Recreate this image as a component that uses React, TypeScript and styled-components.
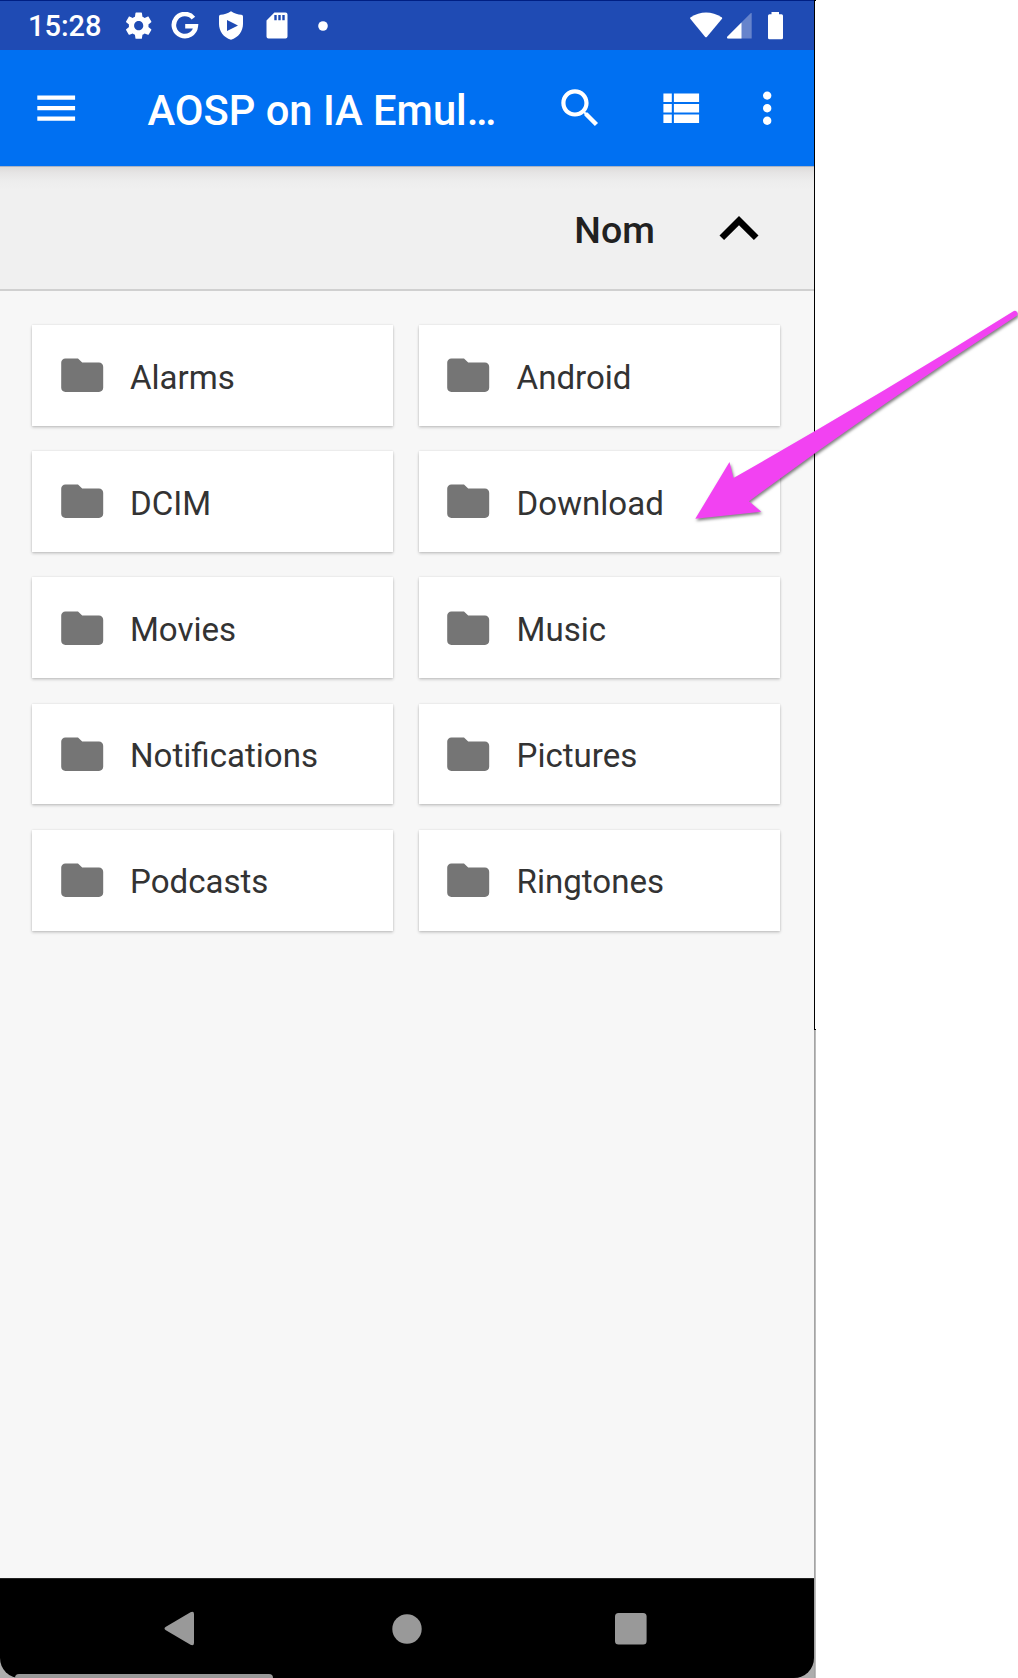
import React from "react";
import styled, { createGlobalStyle } from "styled-components";

const GlobalStyle = createGlobalStyle`
  * { box-sizing: border-box; }
  body { margin: 0; background: #fff; font-family: Roboto, "Liberation Sans", sans-serif; }
  svg { display: block; flex: none; }
`;

const Page = styled.main`
  position: relative;
  display: flex;
  width: 1018px;
  height: 1678px;
  overflow: hidden;
`;

const Screen = styled.section`
  display: flex;
  flex-direction: column;
  width: 814px;
  height: 1678px;
  background: #f7f7f7;
`;

const DeviceEdge = styled.div`
  display: flex;
  flex-direction: column;
  width: 2px;
`;

const EdgeDark = styled.div`
  height: 1030px;
  border-left: 1px solid #000;
  border-top: 1px solid #000;
  border-bottom: 1px solid #000;
  background: #fff;
`;

const EdgeLight = styled.div`
  flex: 1;
  border-left: 1px solid #a4a4a4;
  background: #bcbcbc;
`;

const StatusBar = styled.header`
  display: flex;
  align-items: center;
  height: 50px;
  padding: 0 31px 0 28px;
  border-top: 1px solid #001f83;
  background: #1f4bb4;
  color: #fff;
`;

const Clock = styled.time`
  width: 88px;
  font-size: 29px;
  font-weight: 500;
  line-height: 50px;
  padding-top: 1px;
`;

const StatusSlot = styled.span`
  display: flex;
  justify-content: center;
  width: 46px;
`;

const StatusRight = styled.div`
  display: flex;
  align-items: center;
  margin-left: auto;
`;

const Toolbar = styled.nav`
  display: flex;
  align-items: center;
  flex: none;
  height: 116px;
  padding-left: 31px;
  background: #0070f2;
  color: #fff;
`;

const Title = styled.h1`
  width: 377px;
  margin: 5px 0 0 66px;
  font-size: 41.7px;
  font-weight: 500;
  line-height: 50px;
  white-space: nowrap;
`;

const ToolButton = styled.button<{ $gap?: number; $drop?: number; $color?: string }>`
  margin: ${(p) => p.$drop ?? 0}px 0 0 ${(p) => p.$gap ?? 0}px;
  padding: 0;
  border: 0;
  background: none;
  color: ${(p) => p.$color ?? "inherit"};
`;

const SortBar = styled.div`
  display: flex;
  align-items: center;
  justify-content: flex-end;
  flex: none;
  height: 125px;
  padding-right: 35.7px;
  border-bottom: 2px solid #d0d0d0;
  background: linear-gradient(#a9b4c6 0, #a9b4c6 1px, #dddbda 1px, #e6e5e5 7px, #ededed 15px, #f0f0f0 24px);
  color: #212121;
`;

const SortLabel = styled.span`
  margin: 4px 45.4px 0 0;
  font-size: 37.5px;
  font-weight: 500;
  line-height: 46px;
`;

const Grid = styled.div`
  display: grid;
  grid-template-columns: 361.3px 361.3px;
  grid-auto-rows: 100.8px;
  gap: 25.4px 25.3px;
  padding: 34px 0 0 32px;
  flex: 1;
  align-content: start;
`;

const Card = styled.article`
  display: flex;
  align-items: center;
  padding-left: 24.6px;
  background: #fff;
  color: #757575;
  box-shadow: 0 1.5px 3px rgba(0, 0, 0, 0.2), 0 0 2px rgba(0, 0, 0, 0.13);
`;

const FolderName = styled.span`
  margin: 4.4px 0 0 23px;
  color: #333;
  font-size: 33.1px;
  line-height: 40px;
`;

const NavBackdrop = styled.div`
  height: 100px;
  background: linear-gradient(#000 50%, #adadad 50%);
`;

const NavBar = styled.footer`
  display: flex;
  flex-direction: column;
  height: 100px;
  border-top: 1px solid #222;
  border-radius: 0 0 20px 20px;
  background: #000;
`;

const NavButtons = styled.div`
  display: flex;
  align-items: center;
  height: 99px;
  padding-left: 164px;
`;

const NavSlot = styled.span<{ $width: number }>`
  display: flex;
  width: ${(p) => p.$width}px;
`;

const Handle = styled.div`
  width: 258px;
  height: 4px;
  margin: -4px 0 0 15px;
  border-radius: 5px 5px 0 0;
  background: #999;
`;

const Pointer = styled.svg`
  position: absolute;
  left: 680px;
  top: 300px;
  overflow: visible;
  filter: drop-shadow(1px 2px 1.5px rgba(0, 0, 0, 0.5));
`;

const Icon = ({ d, size = 50.4 }: { d: string; size?: number }) => (
  <svg width={size} height={size} viewBox="0 0 24 24" fill="currentColor">
    <path fillRule="evenodd" d={d} />
  </svg>
);

const paths = {
  menu: "M3 18h18v-2H3v2zm0-5h18v-2H3v2zm0-7v2h18V6H3z",
  search:
    "M15.5 14h-.79l-.28-.27C15.41 12.59 16 11.11 16 9.5 16 5.91 13.09 3 9.5 3S3 5.91 3 9.5 5.91 16 9.5 16c1.61 0 3.09-.59 4.23-1.57l.27.28v.79l5 4.99L20.49 19l-4.99-5zm-6 0C7.01 14 5 11.99 5 9.5S7.01 5 9.5 5 14 7.01 14 9.5 11.99 14 9.5 14z",
  list: "M4 14h4v-4H4v4zm0 5h4v-4H4v4zM4 9h4V5H4v4zm5 5h12v-4H9v4zm0 5h12v-4H9v4zM9 5v4h12V5H9z",
  more: "M12 8c1.1 0 2-.9 2-2s-.9-2-2-2-2 .9-2 2 .9 2 2 2zm0 2c-1.1 0-2 .9-2 2s.9 2 2 2 2-.9 2-2-.9-2-2-2zm0 6c-1.1 0-2 .9-2 2s.9 2 2 2 2-.9 2-2-.9-2-2-2z",
  up: "M12 8l-6 6 1.41 1.41L12 10.83l4.59 4.58L18 14z",
  folder: "M10 4H4c-1.1 0-1.99.9-1.99 2L2 18c0 1.1.9 2 2 2h16c1.1 0 2-.9 2-2V8c0-1.1-.9-2-2-2h-8l-2-2z",
  gear: "M19.43 12.98c.04-.32.07-.64.07-.98s-.03-.66-.07-.98l2.11-1.65c.19-.15.24-.42.12-.64l-2-3.46c-.12-.22-.39-.3-.61-.22l-2.49 1c-.52-.4-1.08-.73-1.69-.98l-.38-2.65C14.46 2.18 14.25 2 14 2h-4c-.25 0-.46.18-.49.42l-.38 2.65c-.61.25-1.17.59-1.69.98l-2.49-1c-.23-.09-.49 0-.61.22l-2 3.46c-.13.22-.07.49.12.64l2.11 1.65c-.04.32-.07.65-.07.98s.03.66.07.98l-2.11 1.65c-.19.15-.24.42-.12.64l2 3.46c.12.22.39.3.61.22l2.49-1c.52.4 1.08.73 1.69.98l.38 2.65c.03.24.24.42.49.42h4c.25 0 .46-.18.49-.42l.38-2.65c.61-.25 1.17-.59 1.69-.98l2.49 1c.23.09.49 0 .61-.22l2-3.46c.12-.22.07-.49-.12-.64l-2.11-1.65zM12 15.5c-1.93 0-3.5-1.57-3.5-3.5s1.57-3.5 3.5-3.5 3.5 1.57 3.5 3.5-1.57 3.5-3.5 3.5z",
};

const StatusIcons = () => (
  <>
    <StatusSlot><Icon d={paths.gear} size={31.4} /></StatusSlot>
    <StatusSlot>
      <svg width="28" height="28" viewBox="0 0 28 28" fill="none" stroke="#fff" strokeWidth="4.6">
        <path d="M22.4 6.1A11 11 0 1 0 24.8 14.2H14.2" />
      </svg>
    </StatusSlot>
    <StatusSlot>
      <svg width="24" height="29" viewBox="0 0 24 29" fill="#fff">
        <path
          fillRule="evenodd"
          d="M12 .3C8.700 2.700 5 3.500 1.600 3.800Q0 4 0 5.500V13C0 20 4.500 26.600 12 28.700C19.500 26.600 24 20 24 13V5.500Q24 4 22.400 3.800C19 3.500 15.300 2.700 12 .3ZM8 9L19 14.500L8 20Z"
        />
      </svg>
    </StatusSlot>
    <StatusSlot>
      <svg width="22" height="27" viewBox="0 0 22 27" fill="#fff">
        <path fillRule="evenodd" d="M8.400 .5H19.500A2 2 0 0 1 21.500 2.500V24.500A2 2 0 0 1 19.500 26.500H2.500A2 2 0 0 1 .5 24.500V8.400ZM8.300 3H10.700V8.300H8.300ZM12.300 3H14.700V8.300H12.300ZM16.300 3H18.700V8.300H16.300Z" />
      </svg>
    </StatusSlot>
    <StatusSlot>
      <svg width="10" height="10" viewBox="0 0 10 10" fill="#fff"><circle cx="5" cy="5" r="4.800" /></svg>
    </StatusSlot>
  </>
);

const SignalIcons = () => (
  <svg width="93" height="28" viewBox="0 0 93 28" fill="#fff">
    <path d="M.3 5.500Q16 -4.500 32 5.500L32.200 6.500L17 24.700Q16 25.700 15 24.700L.1 6.500Z" />
    <path d="M61.700 1.500V26.500H38.500Q36.500 26.500 37 24.900L60.600 1.300Q61.700 .5 61.700 1.500Z" opacity=".32" />
    <path d="M51.500 10.400V26.500H38.500Q36.500 26.500 37 24.900Z" />
    <path d="M81.500 0H89V2.200H91.500Q93 2.200 93 3.700V25.800Q93 27.300 91.500 27.300H79.500Q78 27.300 78 25.800V3.700Q78 2.200 79.500 2.200H81.500Z" />
  </svg>
);

const folders = [
  "Alarms", "Android", "DCIM", "Download", "Movies",
  "Music", "Notifications", "Pictures", "Podcasts", "Ringtones",
];

export default function App() {
  return (
    <Page>
      <GlobalStyle />
      <Screen>
        <StatusBar>
          <Clock>15:28</Clock>
          <StatusIcons />
          <StatusRight><SignalIcons /></StatusRight>
        </StatusBar>
        <Toolbar>
          <ToolButton aria-label="Menu"><Icon d={paths.menu} /></ToolButton>
          <Title>AOSP on IA Emul…</Title>
          <ToolButton $gap={31} aria-label="Rechercher"><Icon d={paths.search} /></ToolButton>
          <ToolButton $gap={49.1} aria-label="Liste"><Icon d={paths.list} /></ToolButton>
          <ToolButton $gap={37.1} aria-label="Plus"><Icon d={paths.more} /></ToolButton>
        </Toolbar>
        <SortBar>
          <SortLabel>Nom</SortLabel>
          <ToolButton $drop={3} $color="#000" aria-label="Ordre"><Icon d={paths.up} size={78} /></ToolButton>
        </SortBar>
        <Grid>
          {folders.map((name) => (
            <Card key={name}>
              <Icon d={paths.folder} />
              <FolderName>{name}</FolderName>
            </Card>
          ))}
        </Grid>
        <NavBackdrop>
          <NavBar>
            <NavButtons>
              <NavSlot $width={227.5}>
                <svg width="31" height="35" viewBox="0 0 31 35" fill="#999">
                  <path d="M1.500 16L26.500 1.300Q30 -.2 30 3V32Q30 35.200 26.500 33.700L1.500 19Q-.5 17.500 1.500 16Z" />
                </svg>
              </NavSlot>
              <NavSlot $width={223.5}>
                <svg width="30" height="30" viewBox="0 0 30 30" fill="#999"><circle cx="15" cy="15" r="14.700" /></svg>
              </NavSlot>
              <NavSlot $width={32}>
                <svg width="32" height="32" viewBox="0 0 32 32" fill="#999"><rect width="31.600" height="31.600" rx="3.500" /></svg>
              </NavSlot>
            </NavButtons>
            <Handle />
          </NavBar>
        </NavBackdrop>
      </Screen>
      <DeviceEdge><EdgeDark /><EdgeLight /></DeviceEdge>
      <Pointer width="338" height="240" viewBox="0 0 338 240" fill="#f242f2">
        <path d="M15.300 218.800L49.500 162L53.500 178Q196 97 333 11.500A2.700 2.700 0 0 1 336.500 16Q203 102 69 201.300L81.300 211.700Z" />
      </Pointer>
    </Page>
  );
}
